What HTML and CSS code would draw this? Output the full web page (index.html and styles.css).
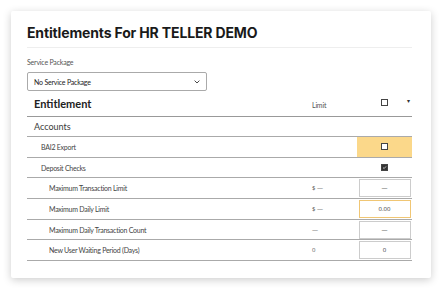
FILE: index.html
```html
<!DOCTYPE html>
<html lang="en">
<head>
  <meta charset="UTF-8">
  <title>Entitlements</title>
  <link rel="stylesheet" href="styles.css">
</head>
<body>
  <div class="card">
    <h1 class="title">Entitlements For HR TELLER DEMO</h1>

    <label class="field-label" for="package">Service Package</label>
    <div class="select">
      <span>No Service Package</span>
      <svg class="chevron" width="6" height="4" viewBox="0 0 6 4"><path d="M0.6 0.6 L3 3 L5.4 0.6" fill="none" stroke="#333" stroke-width="0.9"/></svg>
    </div>

    <div class="table">
      <div class="row head">
        <div class="name">Entitlement</div>
        <div class="limit">Limit</div>
        <div class="value"><span class="box"></span><span class="caret">&#9662;</span></div>
      </div>

      <div class="row group">
        <div class="name">Accounts</div>
        <div class="limit"></div>
        <div class="value"></div>
      </div>

      <div class="row">
        <div class="name lvl1">BAI2 Export</div>
        <div class="limit"></div>
        <div class="value hl"><span class="box"></span></div>
      </div>

      <div class="row">
        <div class="name lvl1">Deposit Checks</div>
        <div class="limit"></div>
        <div class="value"><span class="box checked">
          <svg width="7" height="7" viewBox="0 0 7 7"><path d="M1.5 3.6 L3 5 L5.6 2" fill="none" stroke="#fff" stroke-width="1"/></svg>
        </span></div>
      </div>

      <div class="row">
        <div class="name lvl2">Maximum Transaction Limit</div>
        <div class="limit">$ &mdash;</div>
        <div class="value"><div class="input">&mdash;</div></div>
      </div>

      <div class="row">
        <div class="name lvl2">Maximum Daily Limit</div>
        <div class="limit">$ &mdash;</div>
        <div class="value"><div class="input focus">0.00</div></div>
      </div>

      <div class="row">
        <div class="name lvl2">Maximum Daily Transaction Count</div>
        <div class="limit">&mdash;</div>
        <div class="value"><div class="input">&mdash;</div></div>
      </div>

      <div class="row">
        <div class="name lvl2">New User Waiting Period (Days)</div>
        <div class="limit">0</div>
        <div class="value"><div class="input">0</div></div>
      </div>
    </div>
  </div>
</body>
</html>
```

FILE: styles.css
```css
body {
  margin: 0;
  padding: 11px;
  background: #fff;
  font-family: 'Lato', 'Open Sans', sans-serif;
  color: #333;
}
.card {
  width: 420px;
  box-sizing: border-box;
  height: 267px;
  padding: 14px 19px 0 16px;
  background: #fff;
  border-radius: 2px;
  box-shadow: 0 2px 8px rgba(0,0,0,0.2);
}
.title {
  margin: 0;
  font-family: 'Inter', sans-serif;
  font-weight: 700;
  font-size: 14px;
  line-height: 16px;
  letter-spacing: -0.15px;
  color: #1a1a1a;
  padding-bottom: 6px;
  border-bottom: 1px solid #eee;
}
.field-label {
  display: block;
  margin-top: 10px;
  line-height: 9px;
  font-size: 7px;
  letter-spacing: -0.2px;
  color: #555;
}
.select {
  margin-top: 5px;
  width: 180px;
  height: 19px;
  box-sizing: border-box;
  border: 1px solid #aaa;
  border-radius: 2px;
  display: flex;
  align-items: center;
  justify-content: space-between;
  padding: 0 6px;
  font-size: 7px;
  letter-spacing: -0.2px;
  color: #222;
}
.table {
  font-size: 7px;
  letter-spacing: -0.25px;
}
.row {
  display: flex;
  align-items: center;
  height: 20.67px;
  box-sizing: border-box;
  border-bottom: 1px solid #aaa;
}
.row.head {
  height: 25.5px;
  border-bottom-color: #999;
}
.name {
  flex: 1;
  padding-left: 7px;
  color: #444;
}
.head .name {
  font-size: 11px;
  font-weight: 700;
  letter-spacing: 0;
  color: #222;
  align-self: flex-start;
  padding-top: 6px;
}
.group .name {
  font-size: 9px;
  letter-spacing: 0;
  color: #3a3a3a;
}
.lvl1 { padding-left: 14px; }
.lvl2 { padding-left: 22px; }
.limit {
  width: 45px;
  color: #555;
  font-family: 'Open Sans', sans-serif;
  font-size: 6px;
  letter-spacing: 0;
}
.head .limit {
  font-family: 'Lato', sans-serif;
  font-size: 7px;
  letter-spacing: -0.2px;
  padding-top: 4px;
}
.value {
  width: 55px;
  align-self: stretch;
  display: flex;
  align-items: center;
  justify-content: center;
  position: relative;
}
.hl {
  background: #fbd88a;
}
.box {
  width: 5px;
  height: 5px;
  border: 1px solid #444;
  background: #fff;
  display: inline-flex;
  align-items: center;
  justify-content: center;
}
.box.checked {
  background: #333;
}
.box svg {
  width: 5px;
  height: 5px;
}
.caret {
  position: absolute;
  right: 2px;
  top: 6px;
  font-size: 6px;
  color: #333;
}
.head .box {
  margin-top: -2px;
}
.input {
  width: 52px;
  height: 18px;
  box-sizing: border-box;
  border: 1px solid #ccc;
  display: flex;
  align-items: center;
  justify-content: center;
  font-family: 'Open Sans', sans-serif;
  font-size: 6px;
  letter-spacing: 0;
  color: #333;
}
.input.focus {
  border-color: #f0c674;
}
```
